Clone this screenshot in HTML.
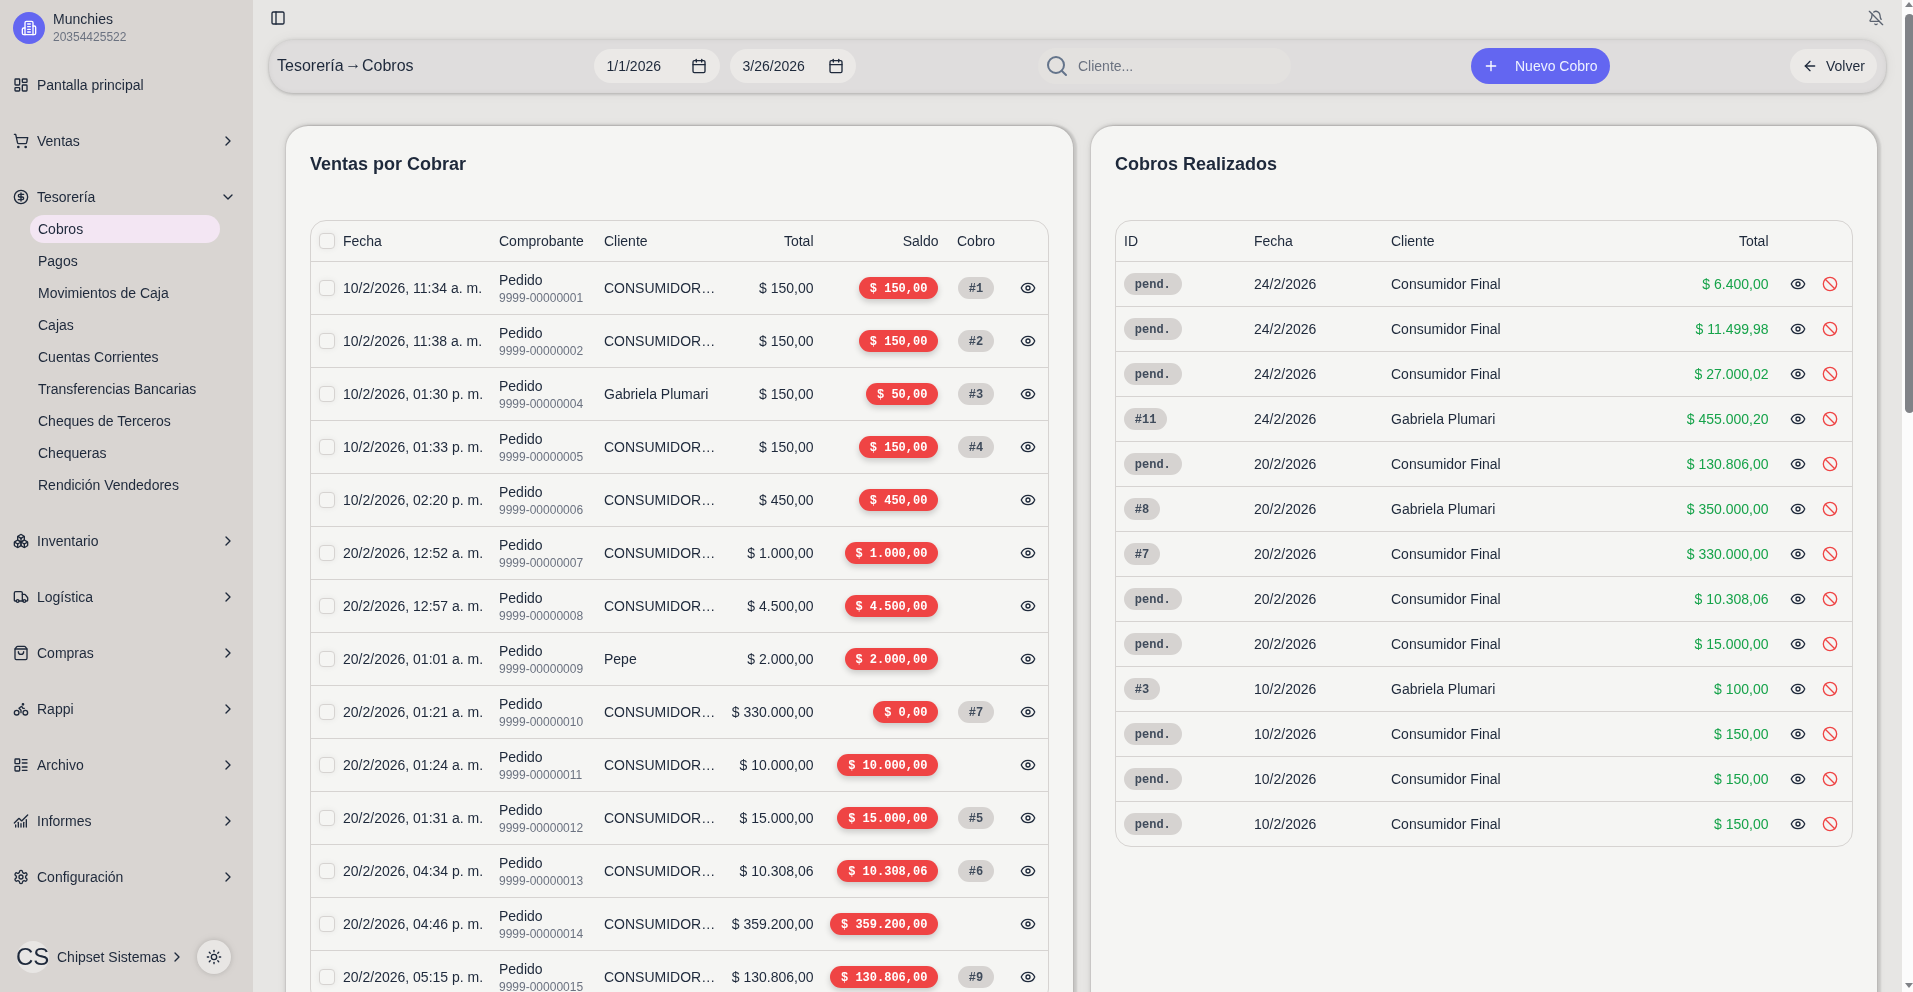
<!DOCTYPE html><html><head><meta charset="utf-8"><title>Cobros</title><style>
*{box-sizing:border-box}
html,body{margin:0;padding:0}
body{width:1913px;height:992px;overflow:hidden;position:relative;background:#e7e6e4;font-family:"Liberation Sans",sans-serif;color:#1e293b;font-size:14px}
.abs{position:absolute}
svg{display:block}
#sb{position:absolute;left:0;top:0;width:253px;height:992px;background:#d9d5d2}
.nav{position:absolute;left:0;width:253px;height:28px;display:flex;align-items:center;font-size:14px;color:#1e293b}
.nav .ic{position:absolute;left:13px;top:6px}
.nav .tx{position:absolute;left:37px;top:6px;line-height:16px;white-space:nowrap}
.nav .ch{position:absolute;left:219.5px;top:6px}
.sub{position:absolute;left:30px;width:190px;height:28px;font-size:14px;color:#1e293b}
.sub .tx{position:absolute;left:8px;top:6px;line-height:16px;white-space:nowrap}
.hdr{position:absolute;left:269px;top:40px;width:1617px;height:53px;border-radius:24px;background:#dfdddd;
  box-shadow: inset 0 0 5px rgba(0,0,0,.05), 0 2px 3px rgba(0,0,0,.10), 0 0 0 1px rgba(0,0,0,.03), 0 0 3px 2px rgba(0,0,0,.05), 0 0 14px rgba(0,0,0,.06)}
.pill{position:absolute;height:34px;border-radius:17px;background:#ebe9e7}
.card{position:absolute;top:126px;width:787px;height:900px;border-radius:22px;background:#f5f5f3;
  box-shadow:0 0 0 1px rgba(90,70,70,.06), 3px 0 2px 1px rgba(0,0,0,.10), 0 -2px 3px rgba(0,0,0,.07), -1px 0 3px rgba(0,0,0,.06), 0 0 4px 3px rgba(60,40,60,.035), 0 0 12px rgba(0,0,0,.05)}
.ttl{position:absolute;top:154px;font-size:18px;font-weight:700;line-height:21px;color:#1e293b;white-space:nowrap}
.tbl{position:absolute;top:220px;border:1px solid #d6d3d1;border-radius:16px;background:#f5f5f3}
.row{position:absolute;left:0;right:0;border-top:1px solid #d6d3d1}
.t{position:absolute;white-space:nowrap;line-height:16px;font-size:14px;color:#1e293b}
.sm{position:absolute;white-space:nowrap;line-height:14px;font-size:12px;color:#6b7280}
.bdg span{position:relative;top:1px}
.bdg{position:absolute;height:22px;line-height:22px;border-radius:11px;padding:0 10.8px;font-family:"Liberation Mono",monospace;font-weight:700;font-size:12px;white-space:nowrap}
.red{background:#ef4444;color:#fff;box-shadow:0 3px 6px rgba(0,0,0,.18)}
.gray{background:#d6d3d1;color:#3f4b5b}
.cb{position:absolute;width:16px;height:16px;border-radius:4px;border:1px solid #d6d3d1;background:#f5f5f3;box-shadow:0 0 6px rgba(0,0,0,.06)}
</style></head><body><div id="root" style="position:absolute;left:0;top:0;width:1913px;height:992px;will-change:transform">
<div id="sb">
<div class="abs" style="left:13px;top:12px;width:32px;height:32px;border-radius:16px;background:#6366f1"></div>
<div class="abs" style="left:21px;top:20px;color:#fff"><svg width="16" height="16" viewBox="0 0 24 24" fill="none" stroke="currentColor" stroke-width="2" stroke-linecap="round" stroke-linejoin="round" ><path d="M6 22V4a2 2 0 0 1 2-2h8a2 2 0 0 1 2 2v18Z"/><path d="M6 12H4a2 2 0 0 0-2 2v6a2 2 0 0 0 2 2h2"/><path d="M18 9h2a2 2 0 0 1 2 2v9a2 2 0 0 1-2 2h-2"/><path d="M10 6h4"/><path d="M10 10h4"/><path d="M10 14h4"/><path d="M10 18h4"/></svg></div>
<div class="abs" style="left:53px;top:11px;font-size:14px;line-height:16px;color:#1e293b">Munchies</div>
<div class="abs" style="left:53px;top:30px;font-size:12px;line-height:14px;color:#6b7280">20354425522</div>
<div class="nav" style="top:71px"><div class="ic"><svg width="16" height="16" viewBox="0 0 24 24" fill="none" stroke="currentColor" stroke-width="2" stroke-linecap="round" stroke-linejoin="round" ><rect width="7" height="9" x="3" y="3" rx="1"/><rect width="7" height="5" x="14" y="3" rx="1"/><rect width="7" height="9" x="14" y="12" rx="1"/><rect width="7" height="5" x="3" y="16" rx="1"/></svg></div><div class="tx">Pantalla principal</div></div>
<div class="nav" style="top:127px"><div class="ic"><svg width="16" height="16" viewBox="0 0 24 24" fill="none" stroke="currentColor" stroke-width="2" stroke-linecap="round" stroke-linejoin="round" ><circle cx="8" cy="21" r="1"/><circle cx="19" cy="21" r="1"/><path d="M2.05 2.05h2l2.66 12.42a2 2 0 0 0 2 1.58h9.78a2 2 0 0 0 1.95-1.57l1.65-7.43H5.12"/></svg></div><div class="tx">Ventas</div><div class="ch"><svg width="16" height="16" viewBox="0 0 24 24" fill="none" stroke="currentColor" stroke-width="2" stroke-linecap="round" stroke-linejoin="round" ><path d="m9 18 6-6-6-6"/></svg></div></div>
<div class="nav" style="top:183px"><div class="ic"><svg width="16" height="16" viewBox="0 0 24 24" fill="none" stroke="currentColor" stroke-width="2" stroke-linecap="round" stroke-linejoin="round" ><circle cx="12" cy="12" r="10"/><path d="M16 8h-6a2 2 0 1 0 0 4h4a2 2 0 1 1 0 4H8"/><path d="M12 18V6"/></svg></div><div class="tx">Tesorería</div><div class="ch"><svg width="16" height="16" viewBox="0 0 24 24" fill="none" stroke="currentColor" stroke-width="2" stroke-linecap="round" stroke-linejoin="round" ><path d="m6 9 6 6 6-6"/></svg></div></div>
<div class="nav" style="top:527px"><div class="ic"><svg width="16" height="16" viewBox="0 0 24 24" fill="none" stroke="currentColor" stroke-width="2" stroke-linecap="round" stroke-linejoin="round" ><path d="M2.97 12.92A2 2 0 0 0 2 14.63v3.24a2 2 0 0 0 .97 1.71l3 1.8a2 2 0 0 0 2.06 0L12 19v-5.5l-5-3-4.03 2.42Z"/><path d="m7 16.5-4.74-2.85"/><path d="m7 16.5 5-3"/><path d="M7 16.5v5.17"/><path d="M12 13.5V19l3.97 2.38a2 2 0 0 0 2.06 0l3-1.8a2 2 0 0 0 .97-1.71v-3.24a2 2 0 0 0-.97-1.71L17 10.5l-5 3Z"/><path d="m17 16.5-5-3"/><path d="m17 16.5 4.74-2.85"/><path d="M17 16.5v5.17"/><path d="M7.97 4.42A2 2 0 0 0 7 6.13v4.37l5 3 5-3V6.13a2 2 0 0 0-.97-1.71l-3-1.8a2 2 0 0 0-2.06 0l-3 1.8Z"/><path d="M12 8 7.26 5.15"/><path d="m12 8 4.74-2.85"/><path d="M12 13.5V8"/></svg></div><div class="tx">Inventario</div><div class="ch"><svg width="16" height="16" viewBox="0 0 24 24" fill="none" stroke="currentColor" stroke-width="2" stroke-linecap="round" stroke-linejoin="round" ><path d="m9 18 6-6-6-6"/></svg></div></div>
<div class="nav" style="top:583px"><div class="ic"><svg width="16" height="16" viewBox="0 0 24 24" fill="none" stroke="currentColor" stroke-width="2" stroke-linecap="round" stroke-linejoin="round" ><path d="M14 18V6a2 2 0 0 0-2-2H4a2 2 0 0 0-2 2v11a1 1 0 0 0 1 1h2"/><path d="M15 18H9"/><path d="M19 18h2a1 1 0 0 0 1-1v-3.65a1 1 0 0 0-.22-.624l-3.48-4.35A1 1 0 0 0 17.52 8H14"/><circle cx="17" cy="18" r="2"/><circle cx="7" cy="18" r="2"/></svg></div><div class="tx">Logística</div><div class="ch"><svg width="16" height="16" viewBox="0 0 24 24" fill="none" stroke="currentColor" stroke-width="2" stroke-linecap="round" stroke-linejoin="round" ><path d="m9 18 6-6-6-6"/></svg></div></div>
<div class="nav" style="top:639px"><div class="ic"><svg width="16" height="16" viewBox="0 0 24 24" fill="none" stroke="currentColor" stroke-width="2" stroke-linecap="round" stroke-linejoin="round" ><path d="M16 10a4 4 0 0 1-8 0"/><path d="M3.103 6.034h17.794"/><path d="M3.4 5.467a2 2 0 0 0-.4 1.2V20a2 2 0 0 0 2 2h14a2 2 0 0 0 2-2V6.667a2 2 0 0 0-.4-1.2l-2-2.667A2 2 0 0 0 17 2H7a2 2 0 0 0-1.6.8z"/></svg></div><div class="tx">Compras</div><div class="ch"><svg width="16" height="16" viewBox="0 0 24 24" fill="none" stroke="currentColor" stroke-width="2" stroke-linecap="round" stroke-linejoin="round" ><path d="m9 18 6-6-6-6"/></svg></div></div>
<div class="nav" style="top:695px"><div class="ic"><svg width="16" height="16" viewBox="0 0 24 24" fill="none" stroke="currentColor" stroke-width="2" stroke-linecap="round" stroke-linejoin="round" ><circle cx="18.5" cy="17.5" r="3.5"/><circle cx="5.5" cy="17.5" r="3.5"/><circle cx="15" cy="5" r="1"/><path d="M12 17.5V14l-3-3 4-3 2 3h2"/></svg></div><div class="tx">Rappi</div><div class="ch"><svg width="16" height="16" viewBox="0 0 24 24" fill="none" stroke="currentColor" stroke-width="2" stroke-linecap="round" stroke-linejoin="round" ><path d="m9 18 6-6-6-6"/></svg></div></div>
<div class="nav" style="top:751px"><div class="ic"><svg width="16" height="16" viewBox="0 0 24 24" fill="none" stroke="currentColor" stroke-width="2" stroke-linecap="round" stroke-linejoin="round" ><rect width="7" height="7" x="3" y="3" rx="1"/><rect width="7" height="7" x="3" y="14" rx="1"/><path d="M14 4h7"/><path d="M14 9h7"/><path d="M14 15h7"/><path d="M14 20h7"/></svg></div><div class="tx">Archivo</div><div class="ch"><svg width="16" height="16" viewBox="0 0 24 24" fill="none" stroke="currentColor" stroke-width="2" stroke-linecap="round" stroke-linejoin="round" ><path d="m9 18 6-6-6-6"/></svg></div></div>
<div class="nav" style="top:807px"><div class="ic"><svg width="16" height="16" viewBox="0 0 24 24" fill="none" stroke="currentColor" stroke-width="2" stroke-linecap="round" stroke-linejoin="round" ><path d="M12 16v5"/><path d="M16 14v7"/><path d="M20 10v11"/><path d="m22 3-8.646 8.646a.5.5 0 0 1-.708 0L9.354 8.354a.5.5 0 0 0-.707 0L2 15"/><path d="M4 18v3"/><path d="M8 14v7"/></svg></div><div class="tx">Informes</div><div class="ch"><svg width="16" height="16" viewBox="0 0 24 24" fill="none" stroke="currentColor" stroke-width="2" stroke-linecap="round" stroke-linejoin="round" ><path d="m9 18 6-6-6-6"/></svg></div></div>
<div class="nav" style="top:863px"><div class="ic"><svg width="16" height="16" viewBox="0 0 24 24" fill="none" stroke="currentColor" stroke-width="2" stroke-linecap="round" stroke-linejoin="round" ><path d="M12.22 2h-.44a2 2 0 0 0-2 2v.18a2 2 0 0 1-1 1.73l-.43.25a2 2 0 0 1-2 0l-.15-.08a2 2 0 0 0-2.73.73l-.22.38a2 2 0 0 0 .73 2.73l.15.1a2 2 0 0 1 1 1.72v.51a2 2 0 0 1-1 1.74l-.15.09a2 2 0 0 0-.73 2.73l.22.38a2 2 0 0 0 2.73.73l.15-.08a2 2 0 0 1 2 0l.43.25a2 2 0 0 1 1 1.73V20a2 2 0 0 0 2 2h.44a2 2 0 0 0 2-2v-.18a2 2 0 0 1 1-1.73l.43-.25a2 2 0 0 1 2 0l.15.08a2 2 0 0 0 2.73-.73l.22-.39a2 2 0 0 0-.73-2.73l-.15-.08a2 2 0 0 1-1-1.74v-.5a2 2 0 0 1 1-1.74l.15-.09a2 2 0 0 0 .73-2.73l-.22-.38a2 2 0 0 0-2.73-.73l-.15.08a2 2 0 0 1-2 0l-.43-.25a2 2 0 0 1-1-1.73V4a2 2 0 0 0-2-2z"/><circle cx="12" cy="12" r="3"/></svg></div><div class="tx">Configuración</div><div class="ch"><svg width="16" height="16" viewBox="0 0 24 24" fill="none" stroke="currentColor" stroke-width="2" stroke-linecap="round" stroke-linejoin="round" ><path d="m9 18 6-6-6-6"/></svg></div></div>
<div class="sub" style="top:215px;background:#f3e6f3;border-radius:14px;"><div class="tx">Cobros</div></div>
<div class="sub" style="top:247px;"><div class="tx">Pagos</div></div>
<div class="sub" style="top:279px;"><div class="tx">Movimientos de Caja</div></div>
<div class="sub" style="top:311px;"><div class="tx">Cajas</div></div>
<div class="sub" style="top:343px;"><div class="tx">Cuentas Corrientes</div></div>
<div class="sub" style="top:375px;"><div class="tx">Transferencias Bancarias</div></div>
<div class="sub" style="top:407px;"><div class="tx">Cheques de Terceros</div></div>
<div class="sub" style="top:439px;"><div class="tx">Chequeras</div></div>
<div class="sub" style="top:471px;"><div class="tx">Rendición Vendedores</div></div>
<div class="abs" style="left:17px;top:941px;width:32px;height:32px;border-radius:16px;background:#e8e6e4"></div>
<div class="abs" style="left:16px;top:943px;font-size:24px;line-height:28px;color:#1e293b">CS</div>
<div class="abs" style="left:57px;top:949px;font-size:14px;line-height:16px;color:#1e293b">Chipset Sistemas</div>
<div class="abs" style="left:169px;top:949px"><svg width="16" height="16" viewBox="0 0 24 24" fill="none" stroke="currentColor" stroke-width="2" stroke-linecap="round" stroke-linejoin="round" ><path d="m9 18 6-6-6-6"/></svg></div>
<div class="abs" style="left:197px;top:940px;width:34px;height:34px;border-radius:17px;background:#e8e6e4;box-shadow:0 0 4px rgba(0,0,0,.10),0 0 10px rgba(0,0,0,.08)"></div>
<div class="abs" style="left:206px;top:949px"><svg width="16" height="16" viewBox="0 0 24 24" fill="none" stroke="currentColor" stroke-width="2" stroke-linecap="round" stroke-linejoin="round" ><circle cx="12" cy="12" r="4"/><path d="M12 2v2"/><path d="M12 20v2"/><path d="m4.93 4.93 1.41 1.41"/><path d="m17.66 17.66 1.41 1.41"/><path d="M2 12h2"/><path d="M20 12h2"/><path d="m6.34 17.66-1.41 1.41"/><path d="m19.07 4.93-1.41 1.41"/></svg></div>
</div>
<div class="abs" style="left:270px;top:10px;color:#1e293b"><svg width="16" height="16" viewBox="0 0 24 24" fill="none" stroke="currentColor" stroke-width="2" stroke-linecap="round" stroke-linejoin="round" ><rect width="18" height="18" x="3" y="3" rx="2"/><path d="M9 3v18"/></svg></div>
<div class="abs" style="left:1868px;top:10px;color:#5b6370"><svg width="16" height="16" viewBox="0 0 24 24" fill="none" stroke="currentColor" stroke-width="2" stroke-linecap="round" stroke-linejoin="round" ><path d="M10.268 21a2 2 0 0 0 3.464 0"/><path d="M17 17H4a1 1 0 0 1-.74-1.673C4.59 13.956 6 12.499 6 8a6 6 0 0 1 .258-1.742"/><path d="m2 2 20 20"/><path d="M8.668 3.01A6 6 0 0 1 18 8c0 2.687.77 4.653 1.707 6.05"/></svg></div>
<div class="hdr"></div>
<div class="abs" style="left:277px;top:57px;font-size:16px;line-height:18px;color:#1e293b;white-space:nowrap">Tesorería<span style="position:relative;top:-2px;margin:0 0.8px 0 1.5px">→</span>Cobros</div>
<div class="pill" style="left:594px;top:49px;width:126px"></div>
<div class="t" style="left:606.5px;top:58px">1/1/2026</div>
<div class="abs" style="left:691px;top:58px"><svg width="16" height="16" viewBox="0 0 24 24" fill="none" stroke="currentColor" stroke-width="2" stroke-linecap="round" stroke-linejoin="round" ><path d="M8 2v4"/><path d="M16 2v4"/><rect width="18" height="18" x="3" y="4" rx="2"/><path d="M3 10h18"/></svg></div>
<div class="pill" style="left:730px;top:49px;width:126px"></div>
<div class="t" style="left:742.5px;top:58px">3/26/2026</div>
<div class="abs" style="left:827.5px;top:58px"><svg width="16" height="16" viewBox="0 0 24 24" fill="none" stroke="currentColor" stroke-width="2" stroke-linecap="round" stroke-linejoin="round" ><path d="M8 2v4"/><path d="M16 2v4"/><rect width="18" height="18" x="3" y="4" rx="2"/><path d="M3 10h18"/></svg></div>
<div class="pill" style="left:1038px;top:48px;width:253px;height:36px;border-radius:18px;background:#e3e1df"></div>
<div class="abs" style="left:1045px;top:54px;color:#64748b"><svg width="24" height="24" viewBox="0 0 24 24" fill="none" stroke="currentColor" stroke-width="2" stroke-linecap="round" stroke-linejoin="round" ><circle cx="11" cy="11" r="8"/><path d="m21 21-4.3-4.3"/></svg></div>
<div class="t" style="left:1078px;top:58px;color:#6b7280">Cliente...</div>
<div class="pill" style="left:1471px;top:48px;width:139px;height:36px;border-radius:18px;background:#6366f1"></div>
<div class="abs" style="left:1483px;top:58px;color:#fff"><svg width="16" height="16" viewBox="0 0 24 24" fill="none" stroke="currentColor" stroke-width="2" stroke-linecap="round" stroke-linejoin="round" ><path d="M5 12h14"/><path d="M12 5v14"/></svg></div>
<div class="t" style="left:1515px;top:58px;color:#eef2ff">Nuevo Cobro</div>
<div class="pill" style="left:1790px;top:49px;width:87px;height:34px;border-radius:17px;background:#ebe9e7"></div>
<div class="abs" style="left:1802px;top:58px"><svg width="16" height="16" viewBox="0 0 24 24" fill="none" stroke="currentColor" stroke-width="2" stroke-linecap="round" stroke-linejoin="round" ><path d="m12 19-7-7 7-7"/><path d="M19 12H5"/></svg></div>
<div class="t" style="left:1826px;top:58px">Volver</div>
<div class="card" style="left:286px"></div>
<div class="card" style="left:1091px;width:786px"></div>
<div class="ttl" style="left:310px">Ventas por Cobrar</div>
<div class="ttl" style="left:1115px">Cobros Realizados</div>
<div class="tbl" style="left:310px;width:739px;height:785px"></div>
<div class="cb" style="left:319px;top:233px"></div>
<div class="t" style="left:343px;top:233px;">Fecha</div>
<div class="t" style="left:499px;top:233px;">Comprobante</div>
<div class="t" style="left:604px;top:233px;">Cliente</div>
<div class="t" style="right:1099.5px;top:233px;">Total</div>
<div class="t" style="right:974.5px;top:233px;">Saldo</div>
<div class="t" style="left:957px;top:233px;">Cobro</div>
<div class="abs" style="left:311px;width:737px;top:261px;height:1px;background:#d6d3d1"></div>
<div class="cb" style="left:319px;top:280px"></div>
<div class="t" style="left:343px;top:280px;">10/2/2026, 11:34 a. m.</div>
<div class="t" style="left:499px;top:272px;">Pedido</div>
<div class="sm" style="left:499px;top:291px;">9999-00000001</div>
<div class="t" style="left:604px;top:280px;">CONSUMIDOR…</div>
<div class="t" style="right:1099.5px;top:280px;">$ 150,00</div>
<div class="bdg red" style="right:974.8px;top:277px"><span>$ 150,00</span></div>
<div class="bdg gray" style="left:958px;top:277px"><span>#1</span></div>
<div class="abs" style="left:1020px;top:280px"><svg width="16" height="16" viewBox="0 0 24 24" fill="none" stroke="currentColor" stroke-width="2" stroke-linecap="round" stroke-linejoin="round" ><path d="M2.062 12.348a1 1 0 0 1 0-.696 10.75 10.75 0 0 1 19.876 0 1 1 0 0 1 0 .696 10.75 10.75 0 0 1-19.876 0"/><circle cx="12" cy="12" r="3"/></svg></div>
<div class="abs" style="left:311px;width:737px;top:314px;height:1px;background:#d6d3d1"></div>
<div class="cb" style="left:319px;top:333px"></div>
<div class="t" style="left:343px;top:333px;">10/2/2026, 11:38 a. m.</div>
<div class="t" style="left:499px;top:325px;">Pedido</div>
<div class="sm" style="left:499px;top:344px;">9999-00000002</div>
<div class="t" style="left:604px;top:333px;">CONSUMIDOR…</div>
<div class="t" style="right:1099.5px;top:333px;">$ 150,00</div>
<div class="bdg red" style="right:974.8px;top:330px"><span>$ 150,00</span></div>
<div class="bdg gray" style="left:958px;top:330px"><span>#2</span></div>
<div class="abs" style="left:1020px;top:333px"><svg width="16" height="16" viewBox="0 0 24 24" fill="none" stroke="currentColor" stroke-width="2" stroke-linecap="round" stroke-linejoin="round" ><path d="M2.062 12.348a1 1 0 0 1 0-.696 10.75 10.75 0 0 1 19.876 0 1 1 0 0 1 0 .696 10.75 10.75 0 0 1-19.876 0"/><circle cx="12" cy="12" r="3"/></svg></div>
<div class="abs" style="left:311px;width:737px;top:367px;height:1px;background:#d6d3d1"></div>
<div class="cb" style="left:319px;top:386px"></div>
<div class="t" style="left:343px;top:386px;">10/2/2026, 01:30 p. m.</div>
<div class="t" style="left:499px;top:378px;">Pedido</div>
<div class="sm" style="left:499px;top:397px;">9999-00000004</div>
<div class="t" style="left:604px;top:386px;">Gabriela Plumari</div>
<div class="t" style="right:1099.5px;top:386px;">$ 150,00</div>
<div class="bdg red" style="right:974.8px;top:383px"><span>$ 50,00</span></div>
<div class="bdg gray" style="left:958px;top:383px"><span>#3</span></div>
<div class="abs" style="left:1020px;top:386px"><svg width="16" height="16" viewBox="0 0 24 24" fill="none" stroke="currentColor" stroke-width="2" stroke-linecap="round" stroke-linejoin="round" ><path d="M2.062 12.348a1 1 0 0 1 0-.696 10.75 10.75 0 0 1 19.876 0 1 1 0 0 1 0 .696 10.75 10.75 0 0 1-19.876 0"/><circle cx="12" cy="12" r="3"/></svg></div>
<div class="abs" style="left:311px;width:737px;top:420px;height:1px;background:#d6d3d1"></div>
<div class="cb" style="left:319px;top:439px"></div>
<div class="t" style="left:343px;top:439px;">10/2/2026, 01:33 p. m.</div>
<div class="t" style="left:499px;top:431px;">Pedido</div>
<div class="sm" style="left:499px;top:450px;">9999-00000005</div>
<div class="t" style="left:604px;top:439px;">CONSUMIDOR…</div>
<div class="t" style="right:1099.5px;top:439px;">$ 150,00</div>
<div class="bdg red" style="right:974.8px;top:436px"><span>$ 150,00</span></div>
<div class="bdg gray" style="left:958px;top:436px"><span>#4</span></div>
<div class="abs" style="left:1020px;top:439px"><svg width="16" height="16" viewBox="0 0 24 24" fill="none" stroke="currentColor" stroke-width="2" stroke-linecap="round" stroke-linejoin="round" ><path d="M2.062 12.348a1 1 0 0 1 0-.696 10.75 10.75 0 0 1 19.876 0 1 1 0 0 1 0 .696 10.75 10.75 0 0 1-19.876 0"/><circle cx="12" cy="12" r="3"/></svg></div>
<div class="abs" style="left:311px;width:737px;top:473px;height:1px;background:#d6d3d1"></div>
<div class="cb" style="left:319px;top:492px"></div>
<div class="t" style="left:343px;top:492px;">10/2/2026, 02:20 p. m.</div>
<div class="t" style="left:499px;top:484px;">Pedido</div>
<div class="sm" style="left:499px;top:503px;">9999-00000006</div>
<div class="t" style="left:604px;top:492px;">CONSUMIDOR…</div>
<div class="t" style="right:1099.5px;top:492px;">$ 450,00</div>
<div class="bdg red" style="right:974.8px;top:489px"><span>$ 450,00</span></div>
<div class="abs" style="left:1020px;top:492px"><svg width="16" height="16" viewBox="0 0 24 24" fill="none" stroke="currentColor" stroke-width="2" stroke-linecap="round" stroke-linejoin="round" ><path d="M2.062 12.348a1 1 0 0 1 0-.696 10.75 10.75 0 0 1 19.876 0 1 1 0 0 1 0 .696 10.75 10.75 0 0 1-19.876 0"/><circle cx="12" cy="12" r="3"/></svg></div>
<div class="abs" style="left:311px;width:737px;top:526px;height:1px;background:#d6d3d1"></div>
<div class="cb" style="left:319px;top:545px"></div>
<div class="t" style="left:343px;top:545px;">20/2/2026, 12:52 a. m.</div>
<div class="t" style="left:499px;top:537px;">Pedido</div>
<div class="sm" style="left:499px;top:556px;">9999-00000007</div>
<div class="t" style="left:604px;top:545px;">CONSUMIDOR…</div>
<div class="t" style="right:1099.5px;top:545px;">$ 1.000,00</div>
<div class="bdg red" style="right:974.8px;top:542px"><span>$ 1.000,00</span></div>
<div class="abs" style="left:1020px;top:545px"><svg width="16" height="16" viewBox="0 0 24 24" fill="none" stroke="currentColor" stroke-width="2" stroke-linecap="round" stroke-linejoin="round" ><path d="M2.062 12.348a1 1 0 0 1 0-.696 10.75 10.75 0 0 1 19.876 0 1 1 0 0 1 0 .696 10.75 10.75 0 0 1-19.876 0"/><circle cx="12" cy="12" r="3"/></svg></div>
<div class="abs" style="left:311px;width:737px;top:579px;height:1px;background:#d6d3d1"></div>
<div class="cb" style="left:319px;top:598px"></div>
<div class="t" style="left:343px;top:598px;">20/2/2026, 12:57 a. m.</div>
<div class="t" style="left:499px;top:590px;">Pedido</div>
<div class="sm" style="left:499px;top:609px;">9999-00000008</div>
<div class="t" style="left:604px;top:598px;">CONSUMIDOR…</div>
<div class="t" style="right:1099.5px;top:598px;">$ 4.500,00</div>
<div class="bdg red" style="right:974.8px;top:595px"><span>$ 4.500,00</span></div>
<div class="abs" style="left:1020px;top:598px"><svg width="16" height="16" viewBox="0 0 24 24" fill="none" stroke="currentColor" stroke-width="2" stroke-linecap="round" stroke-linejoin="round" ><path d="M2.062 12.348a1 1 0 0 1 0-.696 10.75 10.75 0 0 1 19.876 0 1 1 0 0 1 0 .696 10.75 10.75 0 0 1-19.876 0"/><circle cx="12" cy="12" r="3"/></svg></div>
<div class="abs" style="left:311px;width:737px;top:632px;height:1px;background:#d6d3d1"></div>
<div class="cb" style="left:319px;top:651px"></div>
<div class="t" style="left:343px;top:651px;">20/2/2026, 01:01 a. m.</div>
<div class="t" style="left:499px;top:643px;">Pedido</div>
<div class="sm" style="left:499px;top:662px;">9999-00000009</div>
<div class="t" style="left:604px;top:651px;">Pepe</div>
<div class="t" style="right:1099.5px;top:651px;">$ 2.000,00</div>
<div class="bdg red" style="right:974.8px;top:648px"><span>$ 2.000,00</span></div>
<div class="abs" style="left:1020px;top:651px"><svg width="16" height="16" viewBox="0 0 24 24" fill="none" stroke="currentColor" stroke-width="2" stroke-linecap="round" stroke-linejoin="round" ><path d="M2.062 12.348a1 1 0 0 1 0-.696 10.75 10.75 0 0 1 19.876 0 1 1 0 0 1 0 .696 10.75 10.75 0 0 1-19.876 0"/><circle cx="12" cy="12" r="3"/></svg></div>
<div class="abs" style="left:311px;width:737px;top:685px;height:1px;background:#d6d3d1"></div>
<div class="cb" style="left:319px;top:704px"></div>
<div class="t" style="left:343px;top:704px;">20/2/2026, 01:21 a. m.</div>
<div class="t" style="left:499px;top:696px;">Pedido</div>
<div class="sm" style="left:499px;top:715px;">9999-00000010</div>
<div class="t" style="left:604px;top:704px;">CONSUMIDOR…</div>
<div class="t" style="right:1099.5px;top:704px;">$ 330.000,00</div>
<div class="bdg red" style="right:974.8px;top:701px"><span>$ 0,00</span></div>
<div class="bdg gray" style="left:958px;top:701px"><span>#7</span></div>
<div class="abs" style="left:1020px;top:704px"><svg width="16" height="16" viewBox="0 0 24 24" fill="none" stroke="currentColor" stroke-width="2" stroke-linecap="round" stroke-linejoin="round" ><path d="M2.062 12.348a1 1 0 0 1 0-.696 10.75 10.75 0 0 1 19.876 0 1 1 0 0 1 0 .696 10.75 10.75 0 0 1-19.876 0"/><circle cx="12" cy="12" r="3"/></svg></div>
<div class="abs" style="left:311px;width:737px;top:738px;height:1px;background:#d6d3d1"></div>
<div class="cb" style="left:319px;top:757px"></div>
<div class="t" style="left:343px;top:757px;">20/2/2026, 01:24 a. m.</div>
<div class="t" style="left:499px;top:749px;">Pedido</div>
<div class="sm" style="left:499px;top:768px;">9999-00000011</div>
<div class="t" style="left:604px;top:757px;">CONSUMIDOR…</div>
<div class="t" style="right:1099.5px;top:757px;">$ 10.000,00</div>
<div class="bdg red" style="right:974.8px;top:754px"><span>$ 10.000,00</span></div>
<div class="abs" style="left:1020px;top:757px"><svg width="16" height="16" viewBox="0 0 24 24" fill="none" stroke="currentColor" stroke-width="2" stroke-linecap="round" stroke-linejoin="round" ><path d="M2.062 12.348a1 1 0 0 1 0-.696 10.75 10.75 0 0 1 19.876 0 1 1 0 0 1 0 .696 10.75 10.75 0 0 1-19.876 0"/><circle cx="12" cy="12" r="3"/></svg></div>
<div class="abs" style="left:311px;width:737px;top:791px;height:1px;background:#d6d3d1"></div>
<div class="cb" style="left:319px;top:810px"></div>
<div class="t" style="left:343px;top:810px;">20/2/2026, 01:31 a. m.</div>
<div class="t" style="left:499px;top:802px;">Pedido</div>
<div class="sm" style="left:499px;top:821px;">9999-00000012</div>
<div class="t" style="left:604px;top:810px;">CONSUMIDOR…</div>
<div class="t" style="right:1099.5px;top:810px;">$ 15.000,00</div>
<div class="bdg red" style="right:974.8px;top:807px"><span>$ 15.000,00</span></div>
<div class="bdg gray" style="left:958px;top:807px"><span>#5</span></div>
<div class="abs" style="left:1020px;top:810px"><svg width="16" height="16" viewBox="0 0 24 24" fill="none" stroke="currentColor" stroke-width="2" stroke-linecap="round" stroke-linejoin="round" ><path d="M2.062 12.348a1 1 0 0 1 0-.696 10.75 10.75 0 0 1 19.876 0 1 1 0 0 1 0 .696 10.75 10.75 0 0 1-19.876 0"/><circle cx="12" cy="12" r="3"/></svg></div>
<div class="abs" style="left:311px;width:737px;top:844px;height:1px;background:#d6d3d1"></div>
<div class="cb" style="left:319px;top:863px"></div>
<div class="t" style="left:343px;top:863px;">20/2/2026, 04:34 p. m.</div>
<div class="t" style="left:499px;top:855px;">Pedido</div>
<div class="sm" style="left:499px;top:874px;">9999-00000013</div>
<div class="t" style="left:604px;top:863px;">CONSUMIDOR…</div>
<div class="t" style="right:1099.5px;top:863px;">$ 10.308,06</div>
<div class="bdg red" style="right:974.8px;top:860px"><span>$ 10.308,06</span></div>
<div class="bdg gray" style="left:958px;top:860px"><span>#6</span></div>
<div class="abs" style="left:1020px;top:863px"><svg width="16" height="16" viewBox="0 0 24 24" fill="none" stroke="currentColor" stroke-width="2" stroke-linecap="round" stroke-linejoin="round" ><path d="M2.062 12.348a1 1 0 0 1 0-.696 10.75 10.75 0 0 1 19.876 0 1 1 0 0 1 0 .696 10.75 10.75 0 0 1-19.876 0"/><circle cx="12" cy="12" r="3"/></svg></div>
<div class="abs" style="left:311px;width:737px;top:897px;height:1px;background:#d6d3d1"></div>
<div class="cb" style="left:319px;top:916px"></div>
<div class="t" style="left:343px;top:916px;">20/2/2026, 04:46 p. m.</div>
<div class="t" style="left:499px;top:908px;">Pedido</div>
<div class="sm" style="left:499px;top:927px;">9999-00000014</div>
<div class="t" style="left:604px;top:916px;">CONSUMIDOR…</div>
<div class="t" style="right:1099.5px;top:916px;">$ 359.200,00</div>
<div class="bdg red" style="right:974.8px;top:913px"><span>$ 359.200,00</span></div>
<div class="abs" style="left:1020px;top:916px"><svg width="16" height="16" viewBox="0 0 24 24" fill="none" stroke="currentColor" stroke-width="2" stroke-linecap="round" stroke-linejoin="round" ><path d="M2.062 12.348a1 1 0 0 1 0-.696 10.75 10.75 0 0 1 19.876 0 1 1 0 0 1 0 .696 10.75 10.75 0 0 1-19.876 0"/><circle cx="12" cy="12" r="3"/></svg></div>
<div class="abs" style="left:311px;width:737px;top:950px;height:1px;background:#d6d3d1"></div>
<div class="cb" style="left:319px;top:969px"></div>
<div class="t" style="left:343px;top:969px;">20/2/2026, 05:15 p. m.</div>
<div class="t" style="left:499px;top:961px;">Pedido</div>
<div class="sm" style="left:499px;top:980px;">9999-00000015</div>
<div class="t" style="left:604px;top:969px;">CONSUMIDOR…</div>
<div class="t" style="right:1099.5px;top:969px;">$ 130.806,00</div>
<div class="bdg red" style="right:974.8px;top:966px"><span>$ 130.806,00</span></div>
<div class="bdg gray" style="left:958px;top:966px"><span>#9</span></div>
<div class="abs" style="left:1020px;top:969px"><svg width="16" height="16" viewBox="0 0 24 24" fill="none" stroke="currentColor" stroke-width="2" stroke-linecap="round" stroke-linejoin="round" ><path d="M2.062 12.348a1 1 0 0 1 0-.696 10.75 10.75 0 0 1 19.876 0 1 1 0 0 1 0 .696 10.75 10.75 0 0 1-19.876 0"/><circle cx="12" cy="12" r="3"/></svg></div>
<div class="tbl" style="left:1115px;width:738px;height:627px"></div>
<div class="t" style="left:1124px;top:233px;">ID</div>
<div class="t" style="left:1254px;top:233px;">Fecha</div>
<div class="t" style="left:1391px;top:233px;">Cliente</div>
<div class="t" style="right:144.5px;top:233px;">Total</div>
<div class="abs" style="left:1116px;width:736px;top:261px;height:1px;background:#d6d3d1"></div>
<div class="bdg gray" style="left:1124px;top:273px"><span>pend.</span></div>
<div class="t" style="left:1254px;top:276px;">24/2/2026</div>
<div class="t" style="left:1391px;top:276px;">Consumidor Final</div>
<div class="t" style="right:144.5px;top:276px;color:#16a34a">$ 6.400,00</div>
<div class="abs" style="left:1790px;top:276px"><svg width="16" height="16" viewBox="0 0 24 24" fill="none" stroke="currentColor" stroke-width="2" stroke-linecap="round" stroke-linejoin="round" ><path d="M2.062 12.348a1 1 0 0 1 0-.696 10.75 10.75 0 0 1 19.876 0 1 1 0 0 1 0 .696 10.75 10.75 0 0 1-19.876 0"/><circle cx="12" cy="12" r="3"/></svg></div>
<div class="abs" style="left:1822px;top:276px"><svg width="16" height="16" viewBox="0 0 24 24" fill="none" stroke="#ef4444" stroke-width="2" stroke-linecap="round" stroke-linejoin="round" ><circle cx="12" cy="12" r="10"/><path d="m4.9 4.9 14.2 14.2"/></svg></div>
<div class="abs" style="left:1116px;width:736px;top:306px;height:1px;background:#d6d3d1"></div>
<div class="bdg gray" style="left:1124px;top:318px"><span>pend.</span></div>
<div class="t" style="left:1254px;top:321px;">24/2/2026</div>
<div class="t" style="left:1391px;top:321px;">Consumidor Final</div>
<div class="t" style="right:144.5px;top:321px;color:#16a34a">$ 11.499,98</div>
<div class="abs" style="left:1790px;top:321px"><svg width="16" height="16" viewBox="0 0 24 24" fill="none" stroke="currentColor" stroke-width="2" stroke-linecap="round" stroke-linejoin="round" ><path d="M2.062 12.348a1 1 0 0 1 0-.696 10.75 10.75 0 0 1 19.876 0 1 1 0 0 1 0 .696 10.75 10.75 0 0 1-19.876 0"/><circle cx="12" cy="12" r="3"/></svg></div>
<div class="abs" style="left:1822px;top:321px"><svg width="16" height="16" viewBox="0 0 24 24" fill="none" stroke="#ef4444" stroke-width="2" stroke-linecap="round" stroke-linejoin="round" ><circle cx="12" cy="12" r="10"/><path d="m4.9 4.9 14.2 14.2"/></svg></div>
<div class="abs" style="left:1116px;width:736px;top:351px;height:1px;background:#d6d3d1"></div>
<div class="bdg gray" style="left:1124px;top:363px"><span>pend.</span></div>
<div class="t" style="left:1254px;top:366px;">24/2/2026</div>
<div class="t" style="left:1391px;top:366px;">Consumidor Final</div>
<div class="t" style="right:144.5px;top:366px;color:#16a34a">$ 27.000,02</div>
<div class="abs" style="left:1790px;top:366px"><svg width="16" height="16" viewBox="0 0 24 24" fill="none" stroke="currentColor" stroke-width="2" stroke-linecap="round" stroke-linejoin="round" ><path d="M2.062 12.348a1 1 0 0 1 0-.696 10.75 10.75 0 0 1 19.876 0 1 1 0 0 1 0 .696 10.75 10.75 0 0 1-19.876 0"/><circle cx="12" cy="12" r="3"/></svg></div>
<div class="abs" style="left:1822px;top:366px"><svg width="16" height="16" viewBox="0 0 24 24" fill="none" stroke="#ef4444" stroke-width="2" stroke-linecap="round" stroke-linejoin="round" ><circle cx="12" cy="12" r="10"/><path d="m4.9 4.9 14.2 14.2"/></svg></div>
<div class="abs" style="left:1116px;width:736px;top:396px;height:1px;background:#d6d3d1"></div>
<div class="bdg gray" style="left:1124px;top:408px"><span>#11</span></div>
<div class="t" style="left:1254px;top:411px;">24/2/2026</div>
<div class="t" style="left:1391px;top:411px;">Gabriela Plumari</div>
<div class="t" style="right:144.5px;top:411px;color:#16a34a">$ 455.000,20</div>
<div class="abs" style="left:1790px;top:411px"><svg width="16" height="16" viewBox="0 0 24 24" fill="none" stroke="currentColor" stroke-width="2" stroke-linecap="round" stroke-linejoin="round" ><path d="M2.062 12.348a1 1 0 0 1 0-.696 10.75 10.75 0 0 1 19.876 0 1 1 0 0 1 0 .696 10.75 10.75 0 0 1-19.876 0"/><circle cx="12" cy="12" r="3"/></svg></div>
<div class="abs" style="left:1822px;top:411px"><svg width="16" height="16" viewBox="0 0 24 24" fill="none" stroke="#ef4444" stroke-width="2" stroke-linecap="round" stroke-linejoin="round" ><circle cx="12" cy="12" r="10"/><path d="m4.9 4.9 14.2 14.2"/></svg></div>
<div class="abs" style="left:1116px;width:736px;top:441px;height:1px;background:#d6d3d1"></div>
<div class="bdg gray" style="left:1124px;top:453px"><span>pend.</span></div>
<div class="t" style="left:1254px;top:456px;">20/2/2026</div>
<div class="t" style="left:1391px;top:456px;">Consumidor Final</div>
<div class="t" style="right:144.5px;top:456px;color:#16a34a">$ 130.806,00</div>
<div class="abs" style="left:1790px;top:456px"><svg width="16" height="16" viewBox="0 0 24 24" fill="none" stroke="currentColor" stroke-width="2" stroke-linecap="round" stroke-linejoin="round" ><path d="M2.062 12.348a1 1 0 0 1 0-.696 10.75 10.75 0 0 1 19.876 0 1 1 0 0 1 0 .696 10.75 10.75 0 0 1-19.876 0"/><circle cx="12" cy="12" r="3"/></svg></div>
<div class="abs" style="left:1822px;top:456px"><svg width="16" height="16" viewBox="0 0 24 24" fill="none" stroke="#ef4444" stroke-width="2" stroke-linecap="round" stroke-linejoin="round" ><circle cx="12" cy="12" r="10"/><path d="m4.9 4.9 14.2 14.2"/></svg></div>
<div class="abs" style="left:1116px;width:736px;top:486px;height:1px;background:#d6d3d1"></div>
<div class="bdg gray" style="left:1124px;top:498px"><span>#8</span></div>
<div class="t" style="left:1254px;top:501px;">20/2/2026</div>
<div class="t" style="left:1391px;top:501px;">Gabriela Plumari</div>
<div class="t" style="right:144.5px;top:501px;color:#16a34a">$ 350.000,00</div>
<div class="abs" style="left:1790px;top:501px"><svg width="16" height="16" viewBox="0 0 24 24" fill="none" stroke="currentColor" stroke-width="2" stroke-linecap="round" stroke-linejoin="round" ><path d="M2.062 12.348a1 1 0 0 1 0-.696 10.75 10.75 0 0 1 19.876 0 1 1 0 0 1 0 .696 10.75 10.75 0 0 1-19.876 0"/><circle cx="12" cy="12" r="3"/></svg></div>
<div class="abs" style="left:1822px;top:501px"><svg width="16" height="16" viewBox="0 0 24 24" fill="none" stroke="#ef4444" stroke-width="2" stroke-linecap="round" stroke-linejoin="round" ><circle cx="12" cy="12" r="10"/><path d="m4.9 4.9 14.2 14.2"/></svg></div>
<div class="abs" style="left:1116px;width:736px;top:531px;height:1px;background:#d6d3d1"></div>
<div class="bdg gray" style="left:1124px;top:543px"><span>#7</span></div>
<div class="t" style="left:1254px;top:546px;">20/2/2026</div>
<div class="t" style="left:1391px;top:546px;">Consumidor Final</div>
<div class="t" style="right:144.5px;top:546px;color:#16a34a">$ 330.000,00</div>
<div class="abs" style="left:1790px;top:546px"><svg width="16" height="16" viewBox="0 0 24 24" fill="none" stroke="currentColor" stroke-width="2" stroke-linecap="round" stroke-linejoin="round" ><path d="M2.062 12.348a1 1 0 0 1 0-.696 10.75 10.75 0 0 1 19.876 0 1 1 0 0 1 0 .696 10.75 10.75 0 0 1-19.876 0"/><circle cx="12" cy="12" r="3"/></svg></div>
<div class="abs" style="left:1822px;top:546px"><svg width="16" height="16" viewBox="0 0 24 24" fill="none" stroke="#ef4444" stroke-width="2" stroke-linecap="round" stroke-linejoin="round" ><circle cx="12" cy="12" r="10"/><path d="m4.9 4.9 14.2 14.2"/></svg></div>
<div class="abs" style="left:1116px;width:736px;top:576px;height:1px;background:#d6d3d1"></div>
<div class="bdg gray" style="left:1124px;top:588px"><span>pend.</span></div>
<div class="t" style="left:1254px;top:591px;">20/2/2026</div>
<div class="t" style="left:1391px;top:591px;">Consumidor Final</div>
<div class="t" style="right:144.5px;top:591px;color:#16a34a">$ 10.308,06</div>
<div class="abs" style="left:1790px;top:591px"><svg width="16" height="16" viewBox="0 0 24 24" fill="none" stroke="currentColor" stroke-width="2" stroke-linecap="round" stroke-linejoin="round" ><path d="M2.062 12.348a1 1 0 0 1 0-.696 10.75 10.75 0 0 1 19.876 0 1 1 0 0 1 0 .696 10.75 10.75 0 0 1-19.876 0"/><circle cx="12" cy="12" r="3"/></svg></div>
<div class="abs" style="left:1822px;top:591px"><svg width="16" height="16" viewBox="0 0 24 24" fill="none" stroke="#ef4444" stroke-width="2" stroke-linecap="round" stroke-linejoin="round" ><circle cx="12" cy="12" r="10"/><path d="m4.9 4.9 14.2 14.2"/></svg></div>
<div class="abs" style="left:1116px;width:736px;top:621px;height:1px;background:#d6d3d1"></div>
<div class="bdg gray" style="left:1124px;top:633px"><span>pend.</span></div>
<div class="t" style="left:1254px;top:636px;">20/2/2026</div>
<div class="t" style="left:1391px;top:636px;">Consumidor Final</div>
<div class="t" style="right:144.5px;top:636px;color:#16a34a">$ 15.000,00</div>
<div class="abs" style="left:1790px;top:636px"><svg width="16" height="16" viewBox="0 0 24 24" fill="none" stroke="currentColor" stroke-width="2" stroke-linecap="round" stroke-linejoin="round" ><path d="M2.062 12.348a1 1 0 0 1 0-.696 10.75 10.75 0 0 1 19.876 0 1 1 0 0 1 0 .696 10.75 10.75 0 0 1-19.876 0"/><circle cx="12" cy="12" r="3"/></svg></div>
<div class="abs" style="left:1822px;top:636px"><svg width="16" height="16" viewBox="0 0 24 24" fill="none" stroke="#ef4444" stroke-width="2" stroke-linecap="round" stroke-linejoin="round" ><circle cx="12" cy="12" r="10"/><path d="m4.9 4.9 14.2 14.2"/></svg></div>
<div class="abs" style="left:1116px;width:736px;top:666px;height:1px;background:#d6d3d1"></div>
<div class="bdg gray" style="left:1124px;top:678px"><span>#3</span></div>
<div class="t" style="left:1254px;top:681px;">10/2/2026</div>
<div class="t" style="left:1391px;top:681px;">Gabriela Plumari</div>
<div class="t" style="right:144.5px;top:681px;color:#16a34a">$ 100,00</div>
<div class="abs" style="left:1790px;top:681px"><svg width="16" height="16" viewBox="0 0 24 24" fill="none" stroke="currentColor" stroke-width="2" stroke-linecap="round" stroke-linejoin="round" ><path d="M2.062 12.348a1 1 0 0 1 0-.696 10.75 10.75 0 0 1 19.876 0 1 1 0 0 1 0 .696 10.75 10.75 0 0 1-19.876 0"/><circle cx="12" cy="12" r="3"/></svg></div>
<div class="abs" style="left:1822px;top:681px"><svg width="16" height="16" viewBox="0 0 24 24" fill="none" stroke="#ef4444" stroke-width="2" stroke-linecap="round" stroke-linejoin="round" ><circle cx="12" cy="12" r="10"/><path d="m4.9 4.9 14.2 14.2"/></svg></div>
<div class="abs" style="left:1116px;width:736px;top:711px;height:1px;background:#d6d3d1"></div>
<div class="bdg gray" style="left:1124px;top:723px"><span>pend.</span></div>
<div class="t" style="left:1254px;top:726px;">10/2/2026</div>
<div class="t" style="left:1391px;top:726px;">Consumidor Final</div>
<div class="t" style="right:144.5px;top:726px;color:#16a34a">$ 150,00</div>
<div class="abs" style="left:1790px;top:726px"><svg width="16" height="16" viewBox="0 0 24 24" fill="none" stroke="currentColor" stroke-width="2" stroke-linecap="round" stroke-linejoin="round" ><path d="M2.062 12.348a1 1 0 0 1 0-.696 10.75 10.75 0 0 1 19.876 0 1 1 0 0 1 0 .696 10.75 10.75 0 0 1-19.876 0"/><circle cx="12" cy="12" r="3"/></svg></div>
<div class="abs" style="left:1822px;top:726px"><svg width="16" height="16" viewBox="0 0 24 24" fill="none" stroke="#ef4444" stroke-width="2" stroke-linecap="round" stroke-linejoin="round" ><circle cx="12" cy="12" r="10"/><path d="m4.9 4.9 14.2 14.2"/></svg></div>
<div class="abs" style="left:1116px;width:736px;top:756px;height:1px;background:#d6d3d1"></div>
<div class="bdg gray" style="left:1124px;top:768px"><span>pend.</span></div>
<div class="t" style="left:1254px;top:771px;">10/2/2026</div>
<div class="t" style="left:1391px;top:771px;">Consumidor Final</div>
<div class="t" style="right:144.5px;top:771px;color:#16a34a">$ 150,00</div>
<div class="abs" style="left:1790px;top:771px"><svg width="16" height="16" viewBox="0 0 24 24" fill="none" stroke="currentColor" stroke-width="2" stroke-linecap="round" stroke-linejoin="round" ><path d="M2.062 12.348a1 1 0 0 1 0-.696 10.75 10.75 0 0 1 19.876 0 1 1 0 0 1 0 .696 10.75 10.75 0 0 1-19.876 0"/><circle cx="12" cy="12" r="3"/></svg></div>
<div class="abs" style="left:1822px;top:771px"><svg width="16" height="16" viewBox="0 0 24 24" fill="none" stroke="#ef4444" stroke-width="2" stroke-linecap="round" stroke-linejoin="round" ><circle cx="12" cy="12" r="10"/><path d="m4.9 4.9 14.2 14.2"/></svg></div>
<div class="abs" style="left:1116px;width:736px;top:801px;height:1px;background:#d6d3d1"></div>
<div class="bdg gray" style="left:1124px;top:813px"><span>pend.</span></div>
<div class="t" style="left:1254px;top:816px;">10/2/2026</div>
<div class="t" style="left:1391px;top:816px;">Consumidor Final</div>
<div class="t" style="right:144.5px;top:816px;color:#16a34a">$ 150,00</div>
<div class="abs" style="left:1790px;top:816px"><svg width="16" height="16" viewBox="0 0 24 24" fill="none" stroke="currentColor" stroke-width="2" stroke-linecap="round" stroke-linejoin="round" ><path d="M2.062 12.348a1 1 0 0 1 0-.696 10.75 10.75 0 0 1 19.876 0 1 1 0 0 1 0 .696 10.75 10.75 0 0 1-19.876 0"/><circle cx="12" cy="12" r="3"/></svg></div>
<div class="abs" style="left:1822px;top:816px"><svg width="16" height="16" viewBox="0 0 24 24" fill="none" stroke="#ef4444" stroke-width="2" stroke-linecap="round" stroke-linejoin="round" ><circle cx="12" cy="12" r="10"/><path d="m4.9 4.9 14.2 14.2"/></svg></div>
<div class="abs" style="left:1902px;top:0;width:11px;height:992px;background:#fcfcfc"></div>
<div class="abs" style="left:1905px;top:14px;width:9px;height:399px;border-radius:4.5px;background:#808287"></div>
<div class="abs" style="left:1905px;top:2px;width:0;height:0;border-left:4.5px solid transparent;border-right:4.5px solid transparent;border-bottom:5px solid #808287"></div>
<div class="abs" style="left:1905px;top:983px;width:0;height:0;border-left:4.5px solid transparent;border-right:4.5px solid transparent;border-top:5px solid #808287"></div>
</div></body></html>
